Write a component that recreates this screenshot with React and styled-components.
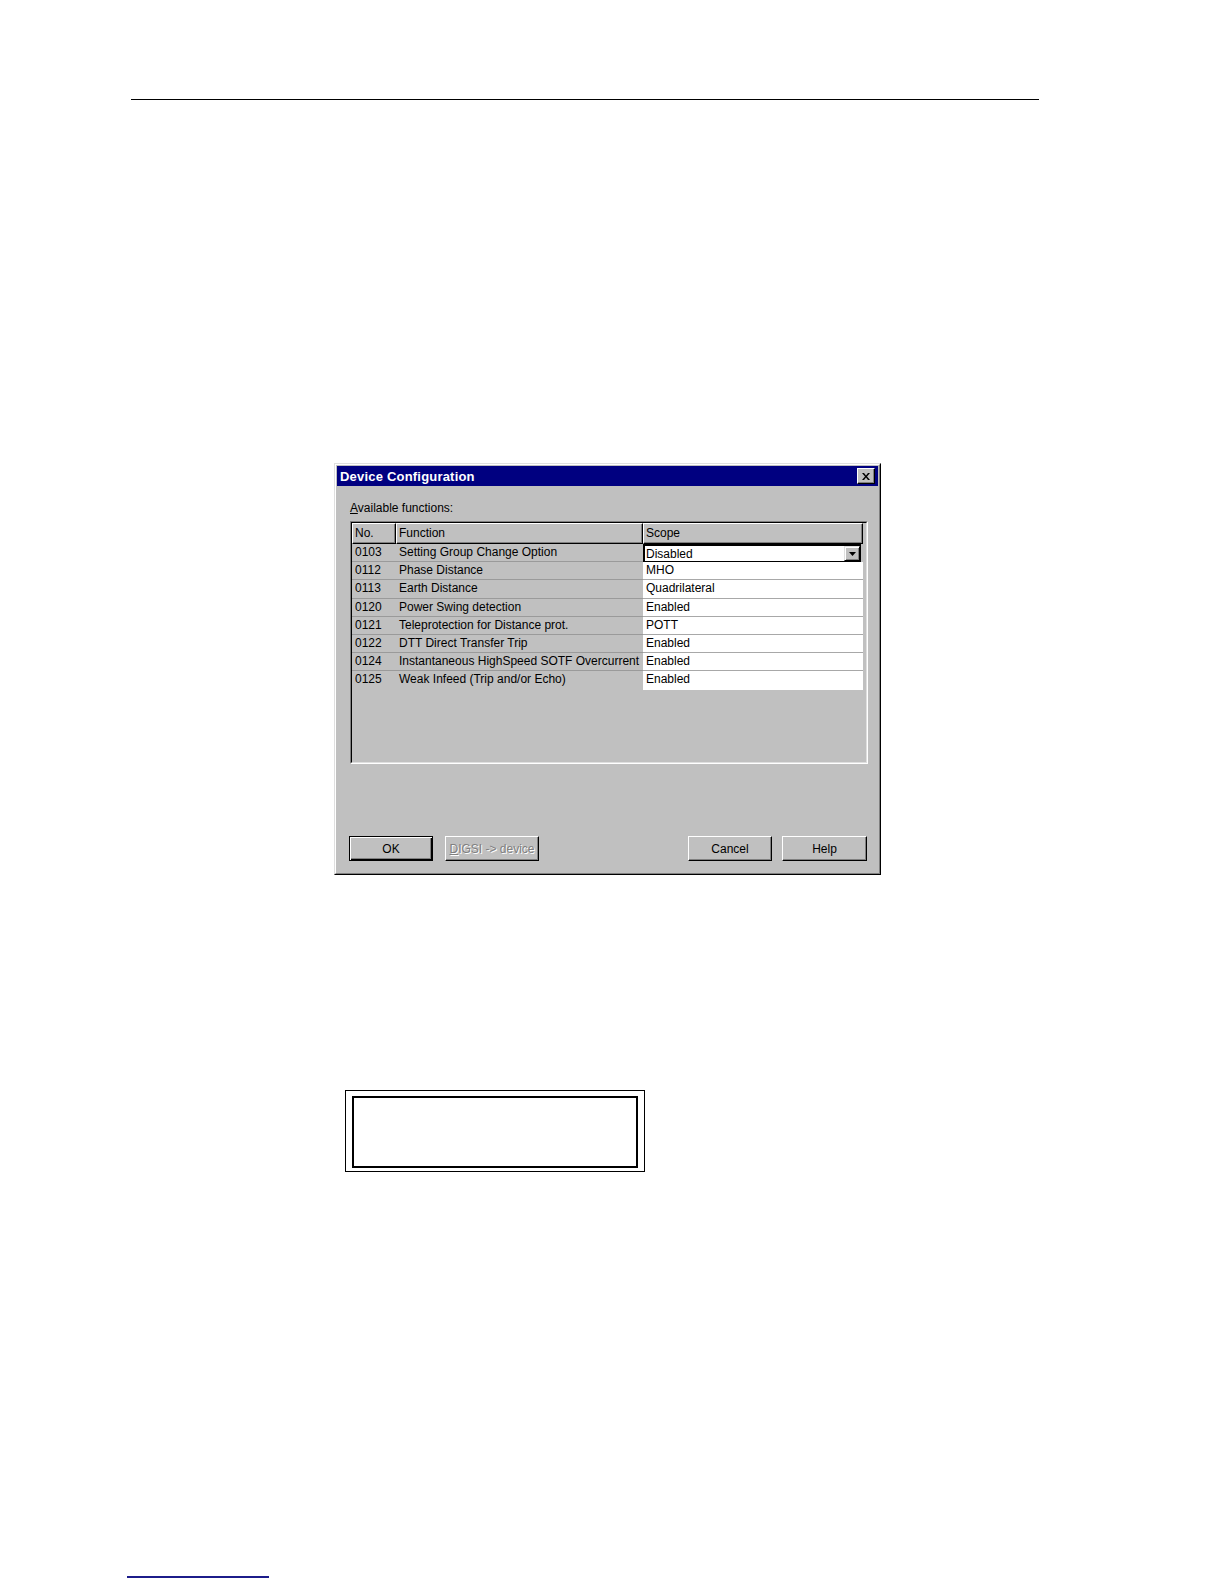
import styled, { createGlobalStyle } from "styled-components";

const GlobalStyle = createGlobalStyle`
  html, body {
    margin: 0;
    padding: 0;
    background: #fff;
    overflow: hidden;
  }
  body {
    font-family: "Liberation Sans", Arial, sans-serif;
  }
`;

const Page = styled.div`
  width: 100%;
  max-width: 1224px;
  height: 1584px;
  display: flex;
  flex-direction: column;
  align-items: flex-start;
  overflow: hidden;
`;

const TopRule = styled.div`
  margin: 99px 0 0 131px;
  width: 908px;
  height: 1px;
  background: #000;
`;

const Dialog = styled.div`
  margin: 363px 0 0 334px;
  width: 547px;
  height: 412px;
  box-sizing: border-box;
  background: #c0c0c0;
  border: 1px solid;
  border-color: #dfdfdf #000 #000 #dfdfdf;
  display: flex;
  flex-direction: column;
`;

const DialogInner = styled.div`
  flex: 1;
  border: 1px solid;
  border-color: #fff #808080 #808080 #fff;
  padding: 1px;
  display: flex;
  flex-direction: column;
`;

const TitleBar = styled.div`
  height: 20px;
  background: #000080;
  display: flex;
  align-items: center;
  justify-content: space-between;
  padding: 0 3px 0 3px;
`;

const Title = styled.span`
  color: #fff;
  font-weight: 700;
  font-size: 13px;
  letter-spacing: 0.2px;
`;

const CloseButton = styled.div`
  width: 18px;
  height: 16px;
  box-sizing: border-box;
  background: #c0c0c0;
  border: 1px solid;
  border-color: #fff #000 #000 #fff;
  box-shadow: inset -1px -1px 0 #808080;
  display: flex;
  align-items: center;
  justify-content: center;
`;

const Body = styled.div`
  flex: 1;
  display: flex;
  flex-direction: column;
  padding: 15px 11px 11px 12px;
`;

const Label = styled.div`
  font-size: 12px;
  color: #000;
  height: 20px;
  line-height: 14px;
  padding-left: 1px;
  u {
    text-decoration: underline;
  }
`;

const ListPanel = styled.div`
  margin-left: 1px;
  width: 518px;
  height: 243px;
  box-sizing: border-box;
  border: 1px solid;
  border-color: #808080 #fff #fff #808080;
  display: flex;
`;

const ListInner = styled.div`
  flex: 1;
  border: 1px solid;
  border-color: #000 #dfdfdf #dfdfdf #000;
  background: #c0c0c0;
  display: flex;
  flex-direction: column;
`;

const Grid = styled.div`
  display: grid;
  grid-template-columns: 44px 247px 220px;
`;

const HeadCell = styled.div`
  height: 21px;
  box-sizing: border-box;
  border: 1px solid;
  border-color: #fff #000 #000 #fff;
  box-shadow: inset -1px -1px 0 #808080;
  font-size: 12px;
  line-height: 19px;
  padding-left: 2px;
  color: #000;
`;

const Cell = styled.div`
  height: 18.2px;
  box-sizing: border-box;
  font-size: 12px;
  line-height: 17px;
  color: #000;
  white-space: nowrap;
  padding-left: ${({ $pad }) => $pad || 3}px;
  background: ${({ $white }) => ($white ? "#fff" : "transparent")};
  border-bottom: 1px solid ${({ $last, $white }) => ($last ? "transparent" : $white ? "#a8a8a8" : "#9a9a9a")};
`;

const Combo = styled.div`
  height: 18.2px;
  box-sizing: border-box;
  background: #fff;
  border: 1px solid #000;
  border-width: 2px 1px 1px 2px;
  display: flex;
  align-items: center;
  justify-content: space-between;
  font-size: 12px;
  padding-left: 1px;
  margin-right: 2px;
  color: #000;
`;

const ComboButton = styled.div`
  width: 16px;
  height: 15px;
  box-sizing: border-box;
  background: #c0c0c0;
  border: 1px solid;
  border-color: #dfdfdf #000 #000 #dfdfdf;
  box-shadow: inset 1px 1px 0 #fff, inset -1px -1px 0 #808080;
  display: flex;
  align-items: center;
  justify-content: center;
`;

const Spacer = styled.div`
  flex: 1;
`;

const ButtonRow = styled.div`
  display: flex;
  align-items: flex-end;
  justify-content: space-between;
`;

const ButtonGroup = styled.div`
  display: flex;
  gap: ${({ $gap }) => $gap}px;
`;

const Button = styled.div`
  width: ${({ $w }) => $w || 84}px;
  height: 25px;
  box-sizing: border-box;
  background: #c0c0c0;
  border: 1px solid;
  border-color: ${({ $default }) => ($default ? "#000" : "#fff #000 #000 #fff")};
  box-shadow: ${({ $default }) =>
    $default
      ? "inset 1px 1px 0 #fff, inset -1px -1px 0 #000, inset -2px -2px 0 #808080"
      : "inset -1px -1px 0 #808080"};
  display: flex;
  align-items: center;
  justify-content: center;
  font-size: 12px;
  color: ${({ $disabled }) => ($disabled ? "#808080" : "#000")};
  text-shadow: ${({ $disabled }) => ($disabled ? "1px 1px 0 #fff" : "none")};
  u {
    text-decoration: underline;
  }
`;

const NoteBox = styled.div`
  margin: 215px 0 0 345px;
  width: 300px;
  height: 82px;
  box-sizing: border-box;
  border: 1px solid #000;
  padding: 5px 6px 3px 6px;
  display: flex;
`;

const NoteInner = styled.div`
  flex: 1;
  border: 2px solid #000;
`;

const FootRule = styled.div`
  margin: 404px 0 0 127px;
  width: 142px;
  height: 2px;
  background: #1c1c8a;
`;

const rows = [
  ["0103", "Setting Group Change Option", "Disabled"],
  ["0112", "Phase Distance", "MHO"],
  ["0113", "Earth Distance", "Quadrilateral"],
  ["0120", "Power Swing detection", "Enabled"],
  ["0121", "Teleprotection for Distance prot.", "POTT"],
  ["0122", "DTT Direct Transfer Trip", "Enabled"],
  ["0124", "Instantaneous HighSpeed SOTF Overcurrent", "Enabled"],
  ["0125", "Weak Infeed (Trip and/or Echo)", "Enabled"],
];

const CloseIcon = () => (
  <svg width="8" height="7" viewBox="0 0 8 7">
    <path d="M0 0h2l2 2.5L6 0h2L5 3.5 8 7H6L4 4.5 2 7H0l3-3.5z" fill="#000" />
  </svg>
);

const ArrowIcon = () => (
  <svg width="7" height="4" viewBox="0 0 7 4">
    <path d="M0 0h7L3.5 4z" fill="#000" />
  </svg>
);

export default function App() {
  return (
    <>
      <GlobalStyle />
      <Page>
        <TopRule />
        <Dialog>
          <DialogInner>
            <TitleBar>
              <Title>Device Configuration</Title>
              <CloseButton>
                <CloseIcon />
              </CloseButton>
            </TitleBar>
            <Body>
              <Label>
                <u>A</u>vailable functions:
              </Label>
              <ListPanel>
                <ListInner>
                  <Grid>
                    <HeadCell>No.</HeadCell>
                    <HeadCell>Function</HeadCell>
                    <HeadCell>Scope</HeadCell>
                    {rows.map(([no, fn, scope], i) => {
                      const last = i === rows.length - 1;
                      return [
                        <Cell key={no + "n"} $last={last} $pad={3}>
                          {no}
                        </Cell>,
                        <Cell key={no + "f"} $last={last} $pad={3}>
                          {fn}
                        </Cell>,
                        i === 0 ? (
                          <Combo key={no + "s"}>
                            {scope}
                            <ComboButton>
                              <ArrowIcon />
                            </ComboButton>
                          </Combo>
                        ) : (
                          <Cell key={no + "s"} $white $last={last} $pad={3}>
                            {scope}
                          </Cell>
                        ),
                      ];
                    })}
                  </Grid>
                </ListInner>
              </ListPanel>
              <Spacer />
              <ButtonRow>
                <ButtonGroup $gap={12}>
                  <Button $default>OK</Button>
                  <Button $w={94} $disabled>
                    <span>
                      <u>D</u>IGSI -&gt; device
                    </span>
                  </Button>
                </ButtonGroup>
                <ButtonGroup $gap={10}>
                  <Button>Cancel</Button>
                  <Button $w={85}>Help</Button>
                </ButtonGroup>
              </ButtonRow>
            </Body>
          </DialogInner>
        </Dialog>
        <NoteBox>
          <NoteInner />
        </NoteBox>
        <FootRule />
      </Page>
    </>
  );
}
